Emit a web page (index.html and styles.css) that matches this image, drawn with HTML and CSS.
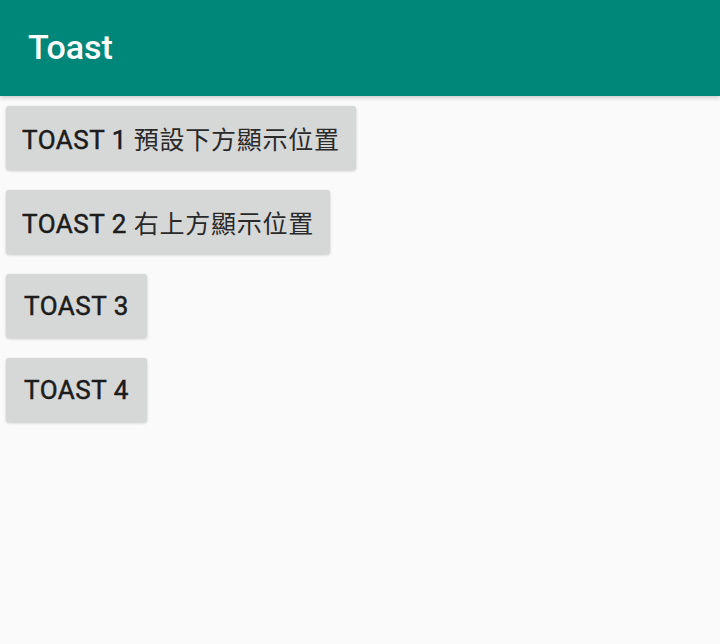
FILE: index.html
```html
<!DOCTYPE html>
<html lang="zh-Hant">
<head>
<meta charset="utf-8">
<title>Toast</title>
<link rel="stylesheet" href="styles.css">
</head>
<body>
<header class="appbar"><h1 class="title">Toast</h1></header>
<main class="content">
  <button class="btn">TOAST 1 <span class="cjk">預設下方顯示位置</span></button>
  <button class="btn">TOAST 2 <span class="cjk">右上方顯示位置</span></button>
  <button class="btn">TOAST 3</button>
  <button class="btn">TOAST 4</button>
</main>
</body>
</html>
```
FILE: styles.css
```css
html, body { margin: 0; padding: 0; }
body {
  width: 720px;
  height: 644px;
  background: #fafafa;
  font-family: Roboto, "Noto Sans CJK TC", sans-serif;
  overflow: hidden;
}
.appbar {
  height: 96px;
  background: #00877a;
  display: flex;
  align-items: center;
  padding-left: 28px;
  box-shadow: 0 2px 4px rgba(0,0,0,0.18);
  position: relative;
}
.title {
  margin: 0;
  margin-top: -2px;
  color: #fff;
  font-size: 34px;
  font-weight: 500;
}
.content {
  display: flex;
  flex-direction: column;
  align-items: flex-start;
  gap: 20px;
  padding: 10px 6px;
}
.btn {
  height: 64px;
  min-width: 141px;
  padding: 0 16px;
  border: none;
  border-radius: 3px;
  background: #d6d7d7;
  box-shadow: 0 1px 3px rgba(0,0,0,0.2);
  font-family: Roboto, "Noto Sans CJK TC", sans-serif;
  font-size: 26px;
  font-weight: 400;
  color: #1c1c1c;
  letter-spacing: 0.02em;
  -webkit-text-stroke: 0.5px #1c1c1c;
}
.cjk {
  font-family: "Noto Sans CJK TC", sans-serif;
  font-weight: 400;
  color: #2a2a2a;
  font-size: 25px;
  letter-spacing: 0.03em;
  -webkit-text-stroke: 0;
}
```
